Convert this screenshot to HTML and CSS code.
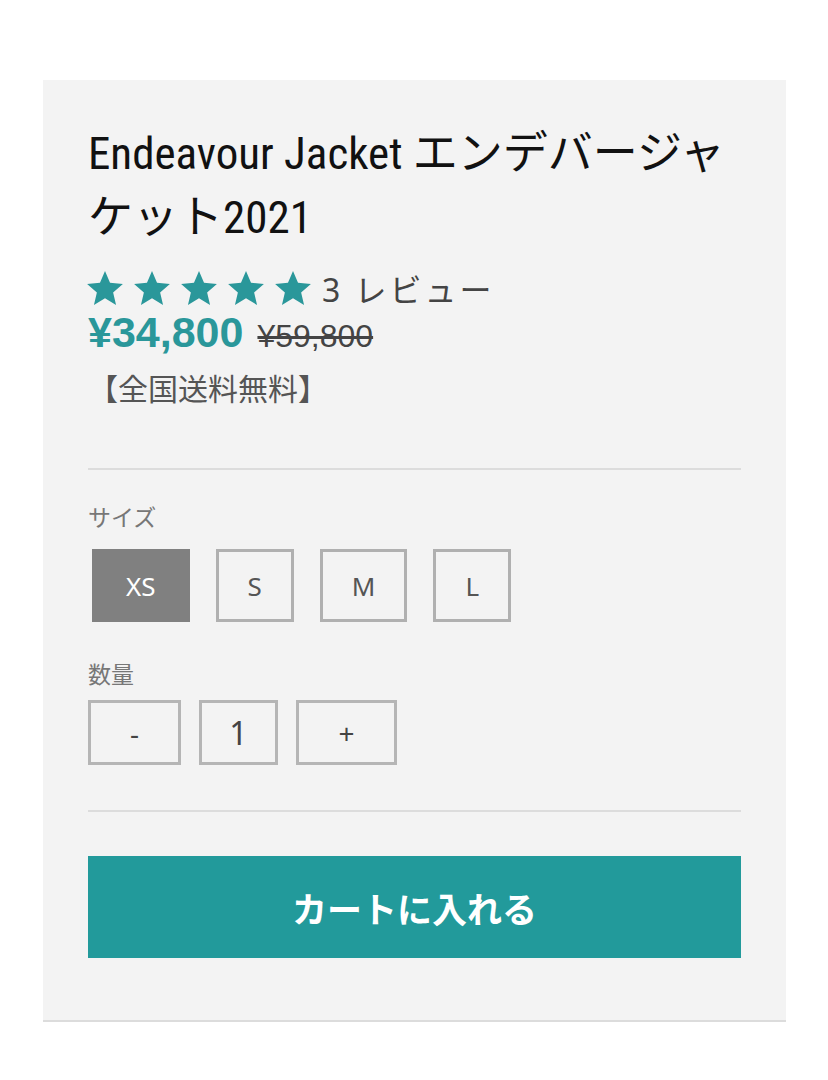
FILE: index.html
```html
<!DOCTYPE html>
<html lang="ja">
<head>
  <meta charset="UTF-8">
  <title>Endeavour Jacket</title>
  <link rel="stylesheet" href="styles.css">
</head>
<body>
  <div class="product">
    <h1 class="title">Endeavour Jacket エンデバージャケット2021</h1>
    <div class="rating">
      <div class="stars">
        <svg class="star" viewBox="2 2 20 19"><path d="M12 17.27L18.18 21l-1.64-7.03L22 9.24l-7.19-.61L12 2 9.19 8.63 2 9.24l5.46 4.73L5.820 21z"/></svg>
        <svg class="star" viewBox="2 2 20 19"><path d="M12 17.27L18.18 21l-1.64-7.03L22 9.24l-7.19-.61L12 2 9.19 8.63 2 9.24l5.46 4.73L5.82 21z"/></svg>
        <svg class="star" viewBox="2 2 20 19"><path d="M12 17.27L18.18 21l-1.64-7.03L22 9.24l-7.19-.61L12 2 9.19 8.63 2 9.24l5.46 4.73L5.82 21z"/></svg>
        <svg class="star" viewBox="2 2 20 19"><path d="M12 17.27L18.18 21l-1.64-7.03L22 9.24l-7.19-.61L12 2 9.19 8.63 2 9.24l5.46 4.73L5.82 21z"/></svg>
        <svg class="star" viewBox="2 2 20 19"><path d="M12 17.27L18.18 21l-1.64-7.03L22 9.24l-7.19-.61L12 2 9.19 8.63 2 9.24l5.46 4.73L5.82 21z"/></svg>
      </div>
      <span class="reviews">3 レビュー</span>
    </div>
    <div class="price">
      <span class="price-now">¥34,800</span>
      <span class="price-old">¥59,800</span>
    </div>
    <p class="shipping">【全国送料無料】</p>

    <hr class="divider">

    <div class="label">サイズ</div>
    <div class="sizes">
      <a href="#" class="size selected">XS</a>
      <a href="#" class="size">S</a>
      <a href="#" class="size">M</a>
      <a href="#" class="size">L</a>
    </div>

    <div class="label label-qty">数量</div>
    <div class="qty">
      <a href="#" class="qty-btn qty-minus">-</a>
      <span class="qty-btn qty-value">1</span>
      <a href="#" class="qty-btn qty-plus">+</a>
    </div>

    <hr class="divider divider-bottom">

    <a href="#" class="cart-btn">カートに入れる</a>
  </div>
</body>
</html>
```

FILE: styles.css
```css
body {
  margin: 0;
  background-color: #fff;
  font-family: "Noto Sans", "Noto Sans CJK JP", sans-serif;
  color: #444;
}
a {
  text-decoration: none;
  color: inherit;
}
.product {
  width: 743px;
  box-sizing: border-box;
  margin: 80px 0 0 43px;
  padding: 42px 45px 62px;
  background-color: #f3f3f3;
  border-bottom: 2px solid #dcdcdc;
}
.title {
  margin: 0;
  font-family: "Liberation Sans Narrow", "Roboto Condensed", "Liberation Sans", "Noto Sans CJK JP", sans-serif;
  font-stretch: condensed;
  font-size: 45px;
  line-height: 64px;
  font-weight: normal;
  color: #111;
}
.rating {
  display: flex;
  align-items: center;
  height: 40px;
  margin-top: 18px;
}
.stars {
  display: flex;
  gap: 11px;
  margin-left: -1px;
}
.star {
  width: 36px;
  height: 34px;
  fill: #2a979a;
}
.reviews {
  margin-left: 11px;
  font-size: 32px;
  letter-spacing: 3px;
  color: #444;
}
.price {
  display: flex;
  align-items: baseline;
  gap: 14px;
  line-height: 48px;
}
.price-now {
  font-family: "Liberation Sans", sans-serif;
  font-size: 43px;
  font-weight: bold;
  color: #2a979a;
}
.price-old {
  font-family: "Liberation Sans", sans-serif;
  font-size: 32px;
  color: #444;
  text-decoration: line-through;
}
.shipping {
  margin: 9px 0 0;
  font-size: 30px;
  line-height: 40px;
  color: #555;
}
.divider {
  margin: 59px 0 0;
  border: 0;
  border-top: 2px solid #dcdcdc;
}
.label {
  margin-top: 31px;
  font-size: 23px;
  line-height: 32px;
  color: #777;
}
.sizes {
  display: flex;
  gap: 26px;
  margin: 16px 0 0 4px;
}
.size {
  display: flex;
  align-items: center;
  justify-content: center;
  height: 73px;
  box-sizing: border-box;
  padding: 0 29px;
  border: 3px solid #b0b0b0;
  font-size: 26px;
  color: #555;
}
.size.selected {
  padding: 0 31px;
  background-color: #808080;
  border-color: #808080;
  color: #fff;
}
.label-qty {
  margin-top: 36px;
}
.qty {
  display: flex;
  gap: 18px;
  margin-top: 10px;
}
.qty-btn {
  display: flex;
  align-items: center;
  justify-content: center;
  height: 65px;
  box-sizing: border-box;
  border: 3px solid #b5b5b5;
  font-size: 28px;
  color: #444;
}
.qty-minus {
  width: 93px;
}
.qty-value {
  width: 79px;
  font-size: 32px;
}
.qty-plus {
  width: 101px;
}
.divider-bottom {
  margin-top: 45px;
}
.cart-btn {
  display: flex;
  align-items: center;
  justify-content: center;
  height: 102px;
  margin-top: 44px;
  background-color: #229a9b;
  font-size: 35px;
  font-weight: bold;
  color: #fff;
}
```
